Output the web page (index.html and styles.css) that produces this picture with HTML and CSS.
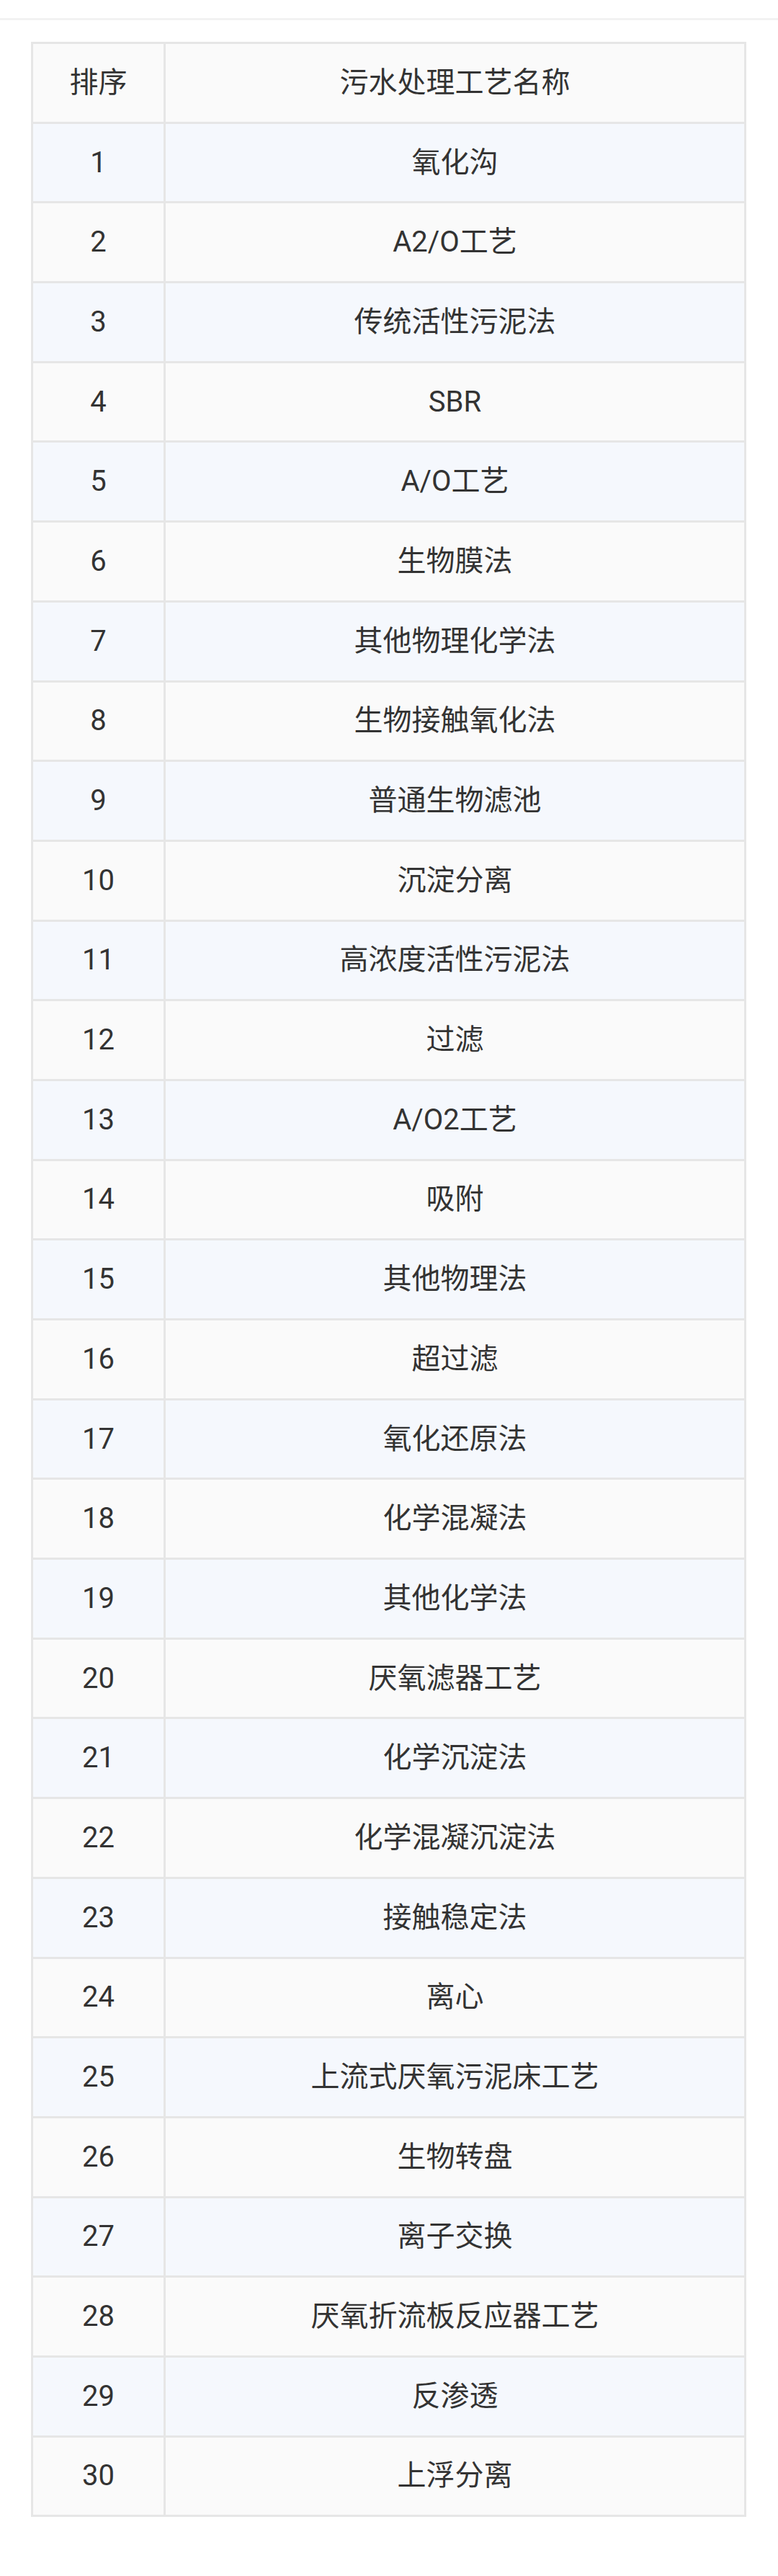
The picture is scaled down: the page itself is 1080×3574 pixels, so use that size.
FILE: index.html
```html
<!DOCTYPE html>
<html lang="zh-CN">
<head>
<meta charset="utf-8">
<title>污水处理工艺排序</title>
<link rel="stylesheet" href="styles.css">
</head>
<body>
<div class="topbar"></div>
<div class="content">
<table class="rank">
<thead>
<tr><th class="c-num">排序</th><th class="c-name">污水处理工艺名称</th></tr>
</thead>
<tbody>
<tr><td>1</td><td>氧化沟</td></tr>
<tr><td>2</td><td>A2/O工艺</td></tr>
<tr><td>3</td><td>传统活性污泥法</td></tr>
<tr><td>4</td><td>SBR</td></tr>
<tr><td>5</td><td>A/O工艺</td></tr>
<tr><td>6</td><td>生物膜法</td></tr>
<tr><td>7</td><td>其他物理化学法</td></tr>
<tr><td>8</td><td>生物接触氧化法</td></tr>
<tr><td>9</td><td>普通生物滤池</td></tr>
<tr><td>10</td><td>沉淀分离</td></tr>
<tr><td>11</td><td>高浓度活性污泥法</td></tr>
<tr><td>12</td><td>过滤</td></tr>
<tr><td>13</td><td>A/O2工艺</td></tr>
<tr><td>14</td><td>吸附</td></tr>
<tr><td>15</td><td>其他物理法</td></tr>
<tr><td>16</td><td>超过滤</td></tr>
<tr><td>17</td><td>氧化还原法</td></tr>
<tr><td>18</td><td>化学混凝法</td></tr>
<tr><td>19</td><td>其他化学法</td></tr>
<tr><td>20</td><td>厌氧滤器工艺</td></tr>
<tr><td>21</td><td>化学沉淀法</td></tr>
<tr><td>22</td><td>化学混凝沉淀法</td></tr>
<tr><td>23</td><td>接触稳定法</td></tr>
<tr><td>24</td><td>离心</td></tr>
<tr><td>25</td><td>上流式厌氧污泥床工艺</td></tr>
<tr><td>26</td><td>生物转盘</td></tr>
<tr><td>27</td><td>离子交换</td></tr>
<tr><td>28</td><td>厌氧折流板反应器工艺</td></tr>
<tr><td>29</td><td>反渗透</td></tr>
<tr><td>30</td><td>上浮分离</td></tr>
</tbody>
</table>
</div>
</body>
</html>
```

FILE: styles.css
```css
html, body {
  margin: 0;
  padding: 0;
  background: #ffffff;
}
body {
  font-family: Roboto, "Noto Sans CJK SC", "Noto Sans", sans-serif;
  color: #333333;
}
.topbar {
  margin-top: 25px;
  height: 3px;
  background: #f2f2f2;
}
.content {
  padding: 30px 44px 0 43px;
}
.rank {
  width: 993px;
  border-collapse: collapse;
  table-layout: fixed;
  font-size: 40px;
  line-height: 1.2;
}
.rank th, .rank td {
  border: 3px solid #e6e6e6;
  text-align: center;
  vertical-align: middle;
  font-weight: 400;
  padding: 0;
}
.rank tr {
  height: 110.7px;
}
.c-num {
  width: 181px;
}
.rank thead tr {
  background: #fafafa;
}
.rank tbody tr:nth-child(odd) {
  background: #f5f8fd;
}
.rank tbody tr:nth-child(even) {
  background: #fafafa;
}
```
